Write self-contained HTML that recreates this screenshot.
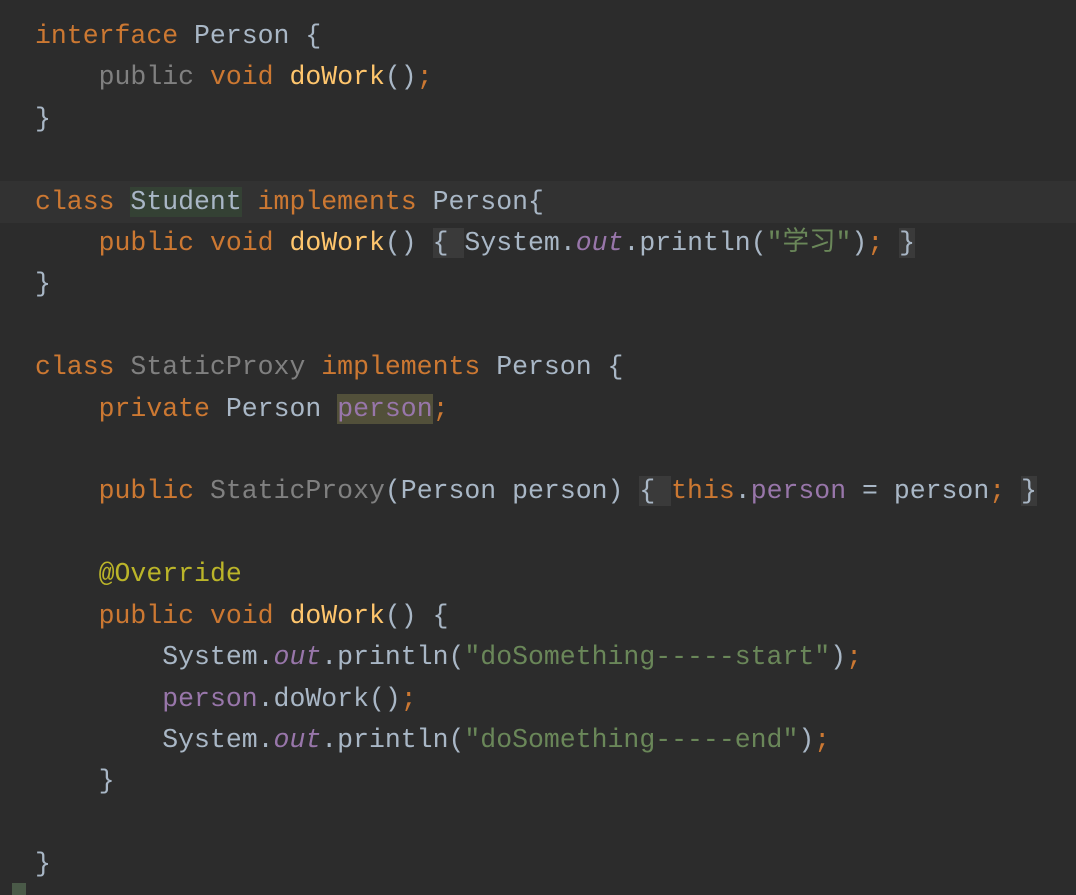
<!DOCTYPE html>
<html><head><meta charset="utf-8"><style>
html,body{margin:0;padding:0;background:#2c2c2c;width:1076px;height:895px;overflow:hidden}
pre{margin:0;position:absolute;left:35px;top:16px;font-family:"Liberation Mono","Noto Sans CJK SC",monospace;font-size:26.5px;line-height:41.4px;color:#a9b7c6}
.k{color:#cc7832}.m{color:#ffc66d}.s{color:#6a8759}.f{color:#9876aa}.i{font-style:italic;color:#9876aa}.g{color:#808080}.a{color:#bbb529}
.cl{position:absolute;left:0;top:181px;width:1076px;height:42px;background:#323232}
.hl{background:#344134}.hp{background:#52503a}.fb{background:#3a3a3a}
</style></head><body>
<div class="cl"></div>
<pre><span class="k">interface</span> Person {
    <span class="g">public</span> <span class="k">void</span> <span class="m">doWork</span>()<span class="k">;</span>
}

<span class="k">class</span> <span class="hl">Student</span> <span class="k">implements</span> Person{
    <span class="k">public void</span> <span class="m">doWork</span>() <span class="fb">{ </span>System.<span class="i">out</span>.println(<span class="s">"学习"</span>)<span class="k">;</span> <span class="fb">}</span>
}

<span class="k">class</span> <span class="g">StaticProxy</span> <span class="k">implements</span> Person {
    <span class="k">private</span> Person <span class="f hp">person</span><span class="k">;</span>

    <span class="k">public</span> <span class="g">StaticProxy</span>(Person person) <span class="fb">{ </span><span class="k">this</span>.<span class="f">person</span> = person<span class="k">;</span> <span class="fb">}</span>

    <span class="a">@Override</span>
    <span class="k">public void</span> <span class="m">doWork</span>() {
        System.<span class="i">out</span>.println(<span class="s">"doSomething-----start"</span>)<span class="k">;</span>
        <span class="f">person</span>.doWork()<span class="k">;</span>
        System.<span class="i">out</span>.println(<span class="s">"doSomething-----end"</span>)<span class="k">;</span>
    }

}</pre>
<div style="position:absolute;left:12px;top:883px;width:14px;height:12px;background:#4a5a48"></div>
</body></html>
